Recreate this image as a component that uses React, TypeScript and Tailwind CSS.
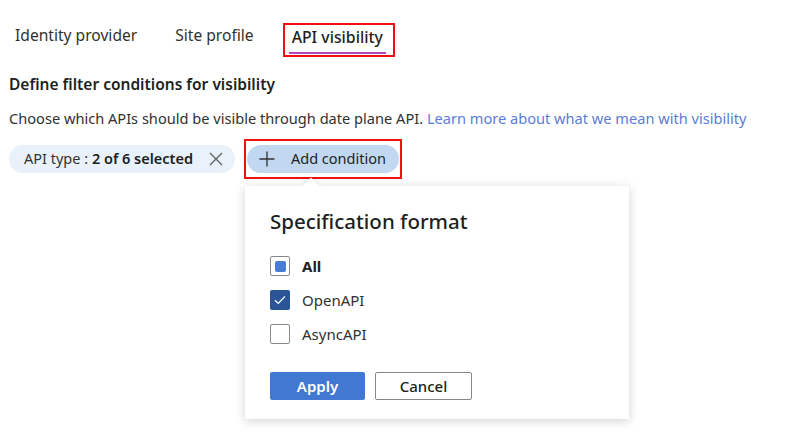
import React from "react";

const font = "font-['Noto_Sans','Open_Sans',sans-serif]";

const App = () => {
  return (
    <div className={`w-[795px] h-[447px] bg-white text-[#323130] ${font} relative overflow-hidden`}>
      {/* Tabs */}
      <div className="flex items-end pl-[15px] pt-[22px] h-[57px]">
        <div className="text-[15.6px] leading-[28px] pb-[8px]">Identity provider</div>
        <div className="text-[15.6px] leading-[28px] pb-[8px] ml-[38px]">Site profile</div>
        <div className="ml-[29px] border-2 border-[#f01010] w-[112px] h-[34px] flex flex-col items-start px-[4px]">
          <div className="text-[15.8px] leading-[24px] font-medium text-[#201f1e] pl-[3px]">API visibility</div>
          <div className="mt-[3px] h-[2px] w-[97px] bg-[#b146c2]" />
        </div>
      </div>

      {/* Content */}
      <div className="px-[9px] pt-[17px]">
        <div className="text-[15.5px] font-semibold text-[#201f1e] leading-[20px]">
          Define filter conditions for visibility
        </div>
        <div className="text-[14.6px] leading-[20px] mt-[14px]">
          Choose which APIs should be visible through date plane API.{" "}
          <span className="text-[#5b7dd6]">Learn more about what we mean with visibility</span>
        </div>

        <div className="flex items-center mt-[11px]">
          <div className="flex items-center h-[28px] w-[226px] rounded-full bg-[#e9f1fa] pl-[15px] text-[14.5px]">
            <span>API type :&nbsp;</span>
            <span className="font-semibold text-[#201f1e]">2 of 6 selected</span>
            <svg className="ml-[16px]" width="14" height="14" viewBox="0 0 14 14">
              <path d="M1 1 L13 13 M13 1 L1 13" stroke="#605e5c" strokeWidth="1.3" fill="none" />
            </svg>
          </div>
          <div className="ml-[9px] border-2 border-[#f01010] p-[1px] h-[40px] flex items-center">
            <div className="flex items-center h-[28px] w-[152px] rounded-full bg-[#c2d8f1] pl-[12px] text-[14.5px] text-[#201f1e]">
              <svg width="16" height="16" viewBox="0 0 16 16">
                <path d="M8 0.5 V15.5 M0.5 8 H15.5" stroke="#323130" strokeWidth="1.3" fill="none" />
              </svg>
              <span className="ml-[16px]">Add condition</span>
            </div>
          </div>
        </div>
      </div>

      {/* Popup */}
      <div className="absolute left-[245px] top-[186px] w-[384px] h-[233px] bg-white shadow-[0_2px_10px_rgba(0,0,0,0.18)]">
        <div className="absolute -top-[6px] left-[60px] w-[12px] h-[12px] bg-white rotate-45 shadow-[-2px_-2px_4px_rgba(0,0,0,0.06)]" />
        <div className="relative px-[25px] pt-[22px]">
          <div className="text-[20.5px] leading-[26px] font-medium text-[#201f1e]">Specification format</div>
          <div className="flex flex-col gap-[14px] mt-[22px]">
            <div className="flex items-center h-[20px]">
              <div className="w-[20px] h-[20px] rounded-[2px] border border-[#8a8886] flex items-center justify-center">
                <div className="w-[11px] h-[11px] rounded-[2px] bg-[#4a7bd6]" />
              </div>
              <span className="ml-[12px] text-[15px] font-bold text-[#201f1e]">All</span>
            </div>
            <div className="flex items-center h-[20px]">
              <div className="w-[20px] h-[20px] rounded-[2px] bg-[#2b5597] flex items-center justify-center">
                <svg width="12" height="10" viewBox="0 0 12 10">
                  <path d="M1 5.2 L4.3 8.4 L11 1.4" stroke="white" strokeWidth="1.3" fill="none" />
                </svg>
              </div>
              <span className="ml-[12px] text-[15px]">OpenAPI</span>
            </div>
            <div className="flex items-center h-[20px]">
              <div className="w-[20px] h-[20px] rounded-[2px] border border-[#8a8886]" />
              <span className="ml-[12px] text-[15px]">AsyncAPI</span>
            </div>
          </div>
          <div className="flex gap-[10px] mt-[28px]">
            <button className="w-[95px] h-[28px] rounded-[2px] bg-[#4178d1] text-white text-[15px] font-semibold">
              Apply
            </button>
            <button className="w-[97px] h-[28px] rounded-[2px] border border-[#8a8886] bg-white text-[#201f1e] text-[15px] font-medium">
              Cancel
            </button>
          </div>
        </div>
      </div>
    </div>
  );
};

export default App;
